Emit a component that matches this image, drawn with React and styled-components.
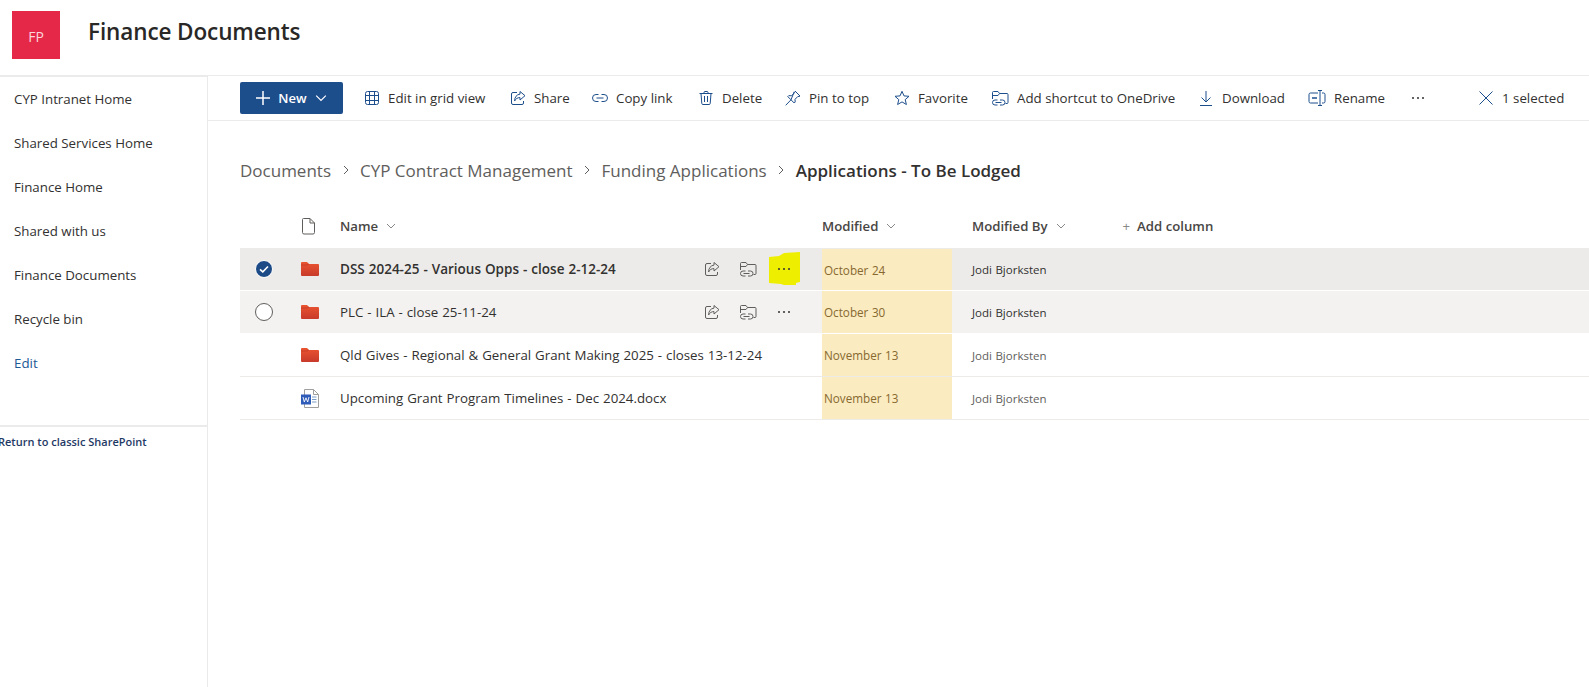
import React from 'react';
import styled, { createGlobalStyle } from 'styled-components';

const INK = '#323130';
const BLUE = '#1d4e8c';

const GlobalStyle = createGlobalStyle`
  html, body {
    margin: 0;
    padding: 0;
    background: #fff;
    font-family: "Open Sans", "Noto Sans", sans-serif;
    color: ${INK};
  }
`;

const Svg = ({ w = 16, h = 16, vb = '0 0 16 16', children, color = INK }) => (
  <svg width={w} height={h} viewBox={vb} fill="none" stroke={color} strokeWidth="1" style={{ display: 'block', flex: 'none' }}>
    {children}
  </svg>
);

const GridIcon = () => (
  <Svg color={BLUE}>
    <rect x="1.5" y="1.5" width="13" height="13" rx="2" />
    <path d="M1.5 5.5h13M1.5 10.5h13M5.5 1.5v13M10.5 1.5v13" />
  </Svg>
);
const ShareIcon = ({ color = BLUE }) => (
  <Svg color={color}>
    <path d="M7 2.5H3a1.5 1.5 0 0 0-1.5 1.5v9A1.5 1.5 0 0 0 3 14.5h9a1.5 1.5 0 0 0 1.5-1.5v-2" />
    <path d="M10 1.5l5 4.2-5 4.300V7.600C7.500 7.600 5.800 8.600 4.600 11c0-3.800 2-6.500 5.400-6.900z" />
  </Svg>
);
const LinkIcon = () => (
  <Svg color={BLUE}>
    <path d="M6.500 4.500H4a3.500 3.500 0 0 0 0 7h2.500M9.500 4.500H12a3.500 3.500 0 0 1 0 7H9.500M4.500 8h7" />
  </Svg>
);
const TrashIcon = () => (
  <Svg color={BLUE}>
    <path d="M1.500 3.500h13M3 3.500l.8 10a1.200 1.200 0 0 0 1.200 1h6a1.200 1.200 0 0 0 1.200-1l.8-10M6 3.500V2.500a1 1 0 0 1 1-1h2a1 1 0 0 1 1 1v1M6.500 6v6M9.500 6v6" />
  </Svg>
);
const PinIcon = () => (
  <Svg color={BLUE}>
    <path d="M10 1l5 5-1 .6-1-.3-3 3 .2 2.700-1 1-3.200-3.200L.7 15.300M6 9.800L2.800 6.600l1-1 2.700.2 3-3-.3-1z" />
  </Svg>
);
const StarIcon = () => (
  <Svg color={BLUE}>
    <path d="M8 1.300l2 4.600 5 .4-3.800 3.300 1.200 4.900L8 11.900l-4.400 2.600 1.200-4.900L1 6.300l5-.4z" />
  </Svg>
);
const ShortcutIcon = ({ color = BLUE }) => (
  <Svg w={18} vb="0 0 18 16" color={color}>
    <path d="M1.500 9V2.500a1 1 0 0 1 1-1H7l1.500 2H16a1 1 0 0 1 1 1v8a1 1 0 0 1-1 1h-1.500M1.500 5.500H7l1.500-2" />
    <path d="M6.500 10H4a2.500 2.500 0 0 0 0 5h2.500M9 10h2.500a2.500 2.500 0 0 1 0 5H9M4.500 12.500h6" />
  </Svg>
);
const DownloadIcon = () => (
  <Svg color={BLUE}>
    <path d="M8 1v11M3.500 7.500L8 12l4.500-4.500M2 15.500h12" />
  </Svg>
);
const RenameIcon = () => (
  <Svg w={18} vb="0 0 18 16" color={BLUE}>
    <path d="M10 3H2.500a1.500 1.500 0 0 0-1.500 1.500v7A1.500 1.500 0 0 0 2.500 13H10M14 3h1.500A1.500 1.500 0 0 1 17 4.500v7a1.500 1.500 0 0 1-1.500 1.500H14M10 .5h4M10 15.500h4M12 .5v15" />
    <path d="M4 8h5" strokeWidth="1.500" />
  </Svg>
);
const CloseIcon = () => (
  <Svg color={BLUE}>
    <path d="M1.500 1.500l13 13M14.500 1.500l-13 13" />
  </Svg>
);
const ViewIcon = () => (
  <Svg color={BLUE}>
    <path d="M1 3h14M1 8h14M1 13h14" />
  </Svg>
);
const FileIcon = () => (
  <Svg w={15} h={18} vb="0 0 15 18" color="#605e5c">
    <path d="M2.500 1.500H9l4.500 4.500v9.500a1.500 1.500 0 0 1-1.500 1.500H3a1.500 1.500 0 0 1-1.500-1.500V2.500a1 1 0 0 1 1-1zM9 1.500V6h4.500" />
  </Svg>
);
const Chevron = ({ color = '#8a8886', size = 10 }) => (
  <svg width={size} height={size} viewBox="0 0 10 10" fill="none" stroke={color} strokeWidth="1" style={{ display: 'block', flex: 'none' }}>
    <path d="M1 3l4 4 4-4" />
  </svg>
);
const DotsIcon = ({ color = INK }) => (
  <svg width="14" height="4" viewBox="0 0 14 4" fill={color} style={{ display: 'block', position: 'relative' }}>
    <circle cx="2" cy="2" r="1" />
    <circle cx="7" cy="2" r="1" />
    <circle cx="12" cy="2" r="1" />
  </svg>
);
const FolderIcon = () => (
  <svg width="18" height="14" viewBox="0 0 18 14" style={{ display: 'block' }}>
    <defs>
      <linearGradient id="folderFill" x1="0" y1="0" x2="0" y2="1">
        <stop offset="0" stopColor="#ea5430" />
        <stop offset="1" stopColor="#c83a2a" />
      </linearGradient>
    </defs>
    <path d="M0 1a1 1 0 0 1 1-1h5l2 2h9a1 1 0 0 1 1 1v10a1 1 0 0 1-1 1H1a1 1 0 0 1-1-1z" fill="url(#folderFill)" />
    <path d="M0 3h6l2-1" fill="none" stroke="#b93222" strokeWidth=".6" />
  </svg>
);
const WordIcon = () => (
  <svg width="18" height="19" viewBox="0 0 18 19" style={{ display: 'block' }}>
    <path d="M3.500.5h9l5 5v13h-14z" fill="#fff" stroke="#a19f9d" />
    <path d="M12.500.5v5h5" fill="none" stroke="#a19f9d" />
    <path d="M11 8h4.500M11 10.500h4.500M11 13h4.500" stroke="#7a9cc9" />
    <rect x="0" y="5.500" width="10" height="10" fill="#2f5cb8" />
    <path d="M2 8l1.300 5 1.700-4.200L6.700 13 8 8" fill="none" stroke="#fff" strokeWidth=".9" />
  </svg>
);
const CheckedIcon = () => (
  <svg width="18" height="18" viewBox="0 0 18 18" style={{ display: 'block' }}>
    <circle cx="9" cy="9" r="8.500" fill="#1b4a86" stroke="#fff" />
    <path d="M5 9.300l2.800 2.500L13 6.500" fill="none" stroke="#fff" strokeWidth="1.600" />
  </svg>
);
const EmptyCheck = () => (
  <svg width="18" height="18" viewBox="0 0 18 18" style={{ display: 'block' }}>
    <circle cx="9" cy="9" r="8.500" fill="#fff" stroke="#605e5c" />
  </svg>
);

const Page = styled.div`
  height: 687px;
  width: 1589px;
  overflow: hidden;
  display: flex;
  flex-direction: column;
`;
const SiteHeader = styled.header`
  height: 75px;
  flex: none;
  display: flex;
  align-items: flex-start;
  padding: 11px 0 0 12px;
  box-sizing: border-box;
`;
const Logo = styled.div`
  width: 48px;
  height: 48px;
  background: #e62848;
  color: #fbd5da;
  font-size: 14px;
  display: flex;
  align-items: center;
  justify-content: center;
  padding-top: 2px;
  box-sizing: border-box;
`;
const SiteTitle = styled.h1`
  margin: 6px 0 0 28px;
  font-size: 22.500px;
  line-height: 30px;
  font-weight: 600;
  letter-spacing: -0.1px;
  color: #292827;
`;
const Body = styled.div`
  flex: 1;
  display: flex;
  min-height: 0;
`;
const Sidebar = styled.nav`
  width: 208px;
  flex: none;
  box-sizing: border-box;
  border-top: 2px solid #ebebeb;
  border-right: 1px solid #eaeaea;
`;
const NavItem = styled.div`
  height: 44px;
  line-height: 44px;
  padding-left: 14px;
  font-size: 13.300px;
  color: ${p => (p.$link ? '#1d5a96' : INK)};
`;
const NavFooter = styled.div`
  margin-top: 40px;
  border-top: 2px solid #ebebeb;
  height: 30px;
  line-height: 30px;
  font-size: 11px;
  font-weight: 600;
  color: #1f3a66;
  text-indent: -2px;
  white-space: nowrap;
  overflow: hidden;
`;
const Main = styled.main`
  flex: 1;
  min-width: 0;
`;
const CommandBar = styled.div`
  height: 46px;
  box-sizing: border-box;
  border-top: 1px solid #ebebeb;
  border-bottom: 1px solid #ebebeb;
  display: flex;
  align-items: center;
  padding-left: 32px;
  white-space: nowrap;
  overflow: hidden;
  font-size: 13.300px;
`;
const NewButton = styled.button`
  width: 103px;
  height: 32px;
  flex: none;
  background: ${BLUE};
  color: #fff;
  border: none;
  border-radius: 2px;
  font: 600 13px "Open Sans", sans-serif;
  display: flex;
  align-items: center;
  justify-content: center;
  gap: 8px;
  margin-right: 21px;
`;
const Command = styled.div`
  display: flex;
  align-items: center;
  gap: 8px;
  flex: none;
  width: ${p => p.$w}px;
`;
const Crumbs = styled.div`
  display: flex;
  align-items: center;
  padding: 34px 0 0 32px;
  height: 30px;
  font-size: 17px;
  color: #605e5c;
  gap: 9.500px;
`;
const CrumbSep = styled.span`
  display: flex;
  transform: rotate(-90deg);
`;
const CrumbCurrent = styled.span`
  font-weight: 600;
  color: ${INK};
`;
const Table = styled.div`
  margin: 19px 0 0 32px;
`;
const HeadRow = styled.div`
  display: grid;
  grid-template-columns: 100px 482px 150px 1fr;
  height: 44px;
  align-items: center;
  font-size: 13.200px;
  font-weight: 600;
  color: #484644;
`;
const Row = styled.div`
  display: grid;
  grid-template-columns: 100px 482px 130px 1fr;
  height: 43px;
  box-sizing: border-box;
  align-items: center;
  font-size: 13.300px;
  word-spacing: 0.5px;
  background: ${p => (p.$selected ? '#edebe9' : p.$hover ? '#f3f2f1' : '#fff')};
  border-bottom: 1px solid ${p => (p.$hover || p.$selected ? '#fff' : '#edebe9')};
`;
const IconCell = styled.div`
  display: grid;
  grid-template-columns: 46px 1fr;
  align-items: center;
  justify-items: start;
  padding-left: 15px;
  box-sizing: border-box;
`;
const HeadCell = styled.div`
  display: flex;
  align-items: center;
  gap: 8px;
`;
const NameCell = styled.div`
  display: flex;
  align-items: center;
  justify-content: space-between;
  font-weight: ${p => (p.$bold ? 600 : 400)};
  font-size: ${p => (p.$bold ? '13.500px' : 'inherit')};
  padding-right: 30px;
  min-width: 0;
`;
const RowActions = styled.div`
  display: flex;
  align-items: center;
  gap: 19px;
`;
const MoreDots = styled.div`
  position: relative;
  width: 16px;
  display: flex;
  justify-content: center;
`;
const Highlight = styled.svg`
  position: absolute;
  left: -7px;
  top: -15px;
`;
const DateCell = styled.div`
  align-self: stretch;
  background: #fbebc1;
  color: #86692f;
  font-size: 11.700px;
  display: flex;
  align-items: center;
  padding-left: 2px;
  margin-top: ${p => (p.$first ? 1 : 0)}px;
`;
const ByCell = styled.div`
  padding-left: 20px;
  font-size: 11.500px;
  color: ${p => (p.$strong ? INK : '#605e5c')};
`;
const ColumnAdd = styled.span`
  font-weight: 600;
  display: flex;
  gap: 7px;
  align-items: center;
  margin-left: 49px;
`;
const Plus = styled.span`
  font-weight: 400;
  color: #8a8886;
`;

const navItems = ['CYP Intranet Home', 'Shared Services Home', 'Finance Home', 'Shared with us', 'Finance Documents', 'Recycle bin'];

const commands = [
  { icon: <GridIcon />, label: 'Edit in grid view', w: 146 },
  { icon: <ShareIcon />, label: 'Share', w: 82 },
  { icon: <LinkIcon />, label: 'Copy link', w: 106 },
  { icon: <TrashIcon />, label: 'Delete', w: 87 },
  { icon: <PinIcon />, label: 'Pin to top', w: 109 },
  { icon: <StarIcon />, label: 'Favorite', w: 97 },
  { icon: <ShortcutIcon />, label: 'Add shortcut to OneDrive', w: 207 },
  { icon: <DownloadIcon />, label: 'Download', w: 110 },
  { icon: <RenameIcon />, label: 'Rename', w: 103 },
];

const rows = [
  { name: 'DSS 2024-25 - Various Opps - close 2-12-24', date: 'October 24', selected: true },
  { name: 'PLC - ILA - close 25-11-24', date: 'October 30', hover: true },
  { name: 'Qld Gives - Regional & General Grant Making 2025 - closes 13-12-24', date: 'November 13' },
  { name: 'Upcoming Grant Program Timelines - Dec 2024.docx', date: 'November 13', word: true },
];

const App = () => (
  <Page>
    <GlobalStyle />
    <SiteHeader>
      <Logo>FP</Logo>
      <SiteTitle>Finance Documents</SiteTitle>
    </SiteHeader>
    <Body>
      <Sidebar>
        {navItems.map(item => (
          <NavItem key={item}>{item}</NavItem>
        ))}
        <NavItem $link>Edit</NavItem>
        <NavFooter>Return to classic SharePoint</NavFooter>
      </Sidebar>
      <Main>
        <CommandBar>
          <NewButton>
            <svg width="14" height="14" viewBox="0 0 14 14" stroke="#fff" strokeWidth="1.500"><path d="M7 0v14M0 7h14" /></svg>
            New
            <Chevron color="#fff" size={12} />
          </NewButton>
          {commands.map(c => (
            <Command key={c.label} $w={c.w}>
              {c.icon}
              {c.label}
            </Command>
          ))}
          <Command $w={67}>
            <DotsIcon />
          </Command>
          <Command $w={110}>
            <CloseIcon />
            1 selected
          </Command>
          <ViewIcon />
        </CommandBar>
        <Crumbs>
          <span>Documents</span>
          <CrumbSep><Chevron color="#605e5c" /></CrumbSep>
          <span>CYP Contract Management</span>
          <CrumbSep><Chevron color="#605e5c" /></CrumbSep>
          <span>Funding Applications</span>
          <CrumbSep><Chevron color="#605e5c" /></CrumbSep>
          <CrumbCurrent>Applications - To Be Lodged</CrumbCurrent>
        </Crumbs>
        <Table>
          <HeadRow>
            <IconCell><span /><FileIcon /></IconCell>
            <HeadCell>Name <Chevron /></HeadCell>
            <HeadCell>Modified <Chevron /></HeadCell>
            <HeadCell>
              Modified By <Chevron />
              <ColumnAdd><Plus>+</Plus>Add column</ColumnAdd>
            </HeadCell>
          </HeadRow>
          {rows.map((r, i) => (
            <Row key={r.name} $selected={r.selected} $hover={r.hover}>
              <IconCell>
                {r.selected ? <CheckedIcon /> : r.hover ? <EmptyCheck /> : <span />}
                {r.word ? <WordIcon /> : <FolderIcon />}
              </IconCell>
              <NameCell $bold={r.selected}>
                {r.name}
                {(r.selected || r.hover) && (
                  <RowActions>
                    <ShareIcon color="#605e5c" />
                    <ShortcutIcon color="#605e5c" />
                    <MoreDots>
                      {r.selected && (
                        <Highlight width="32" height="34" viewBox="0 0 32 34">
                          <path d="M0 5l10-1 5-3 16-1v30l-4 1v2H15l-3-1-12-1z" fill="#eeee00" />
                        </Highlight>
                      )}
                      <DotsIcon />
                    </MoreDots>
                  </RowActions>
                )}
              </NameCell>
              <DateCell $first={i === 0}>{r.date}</DateCell>
              <ByCell $strong={r.selected || r.hover}>Jodi Bjorksten</ByCell>
            </Row>
          ))}
        </Table>
      </Main>
    </Body>
  </Page>
);

export default App;
